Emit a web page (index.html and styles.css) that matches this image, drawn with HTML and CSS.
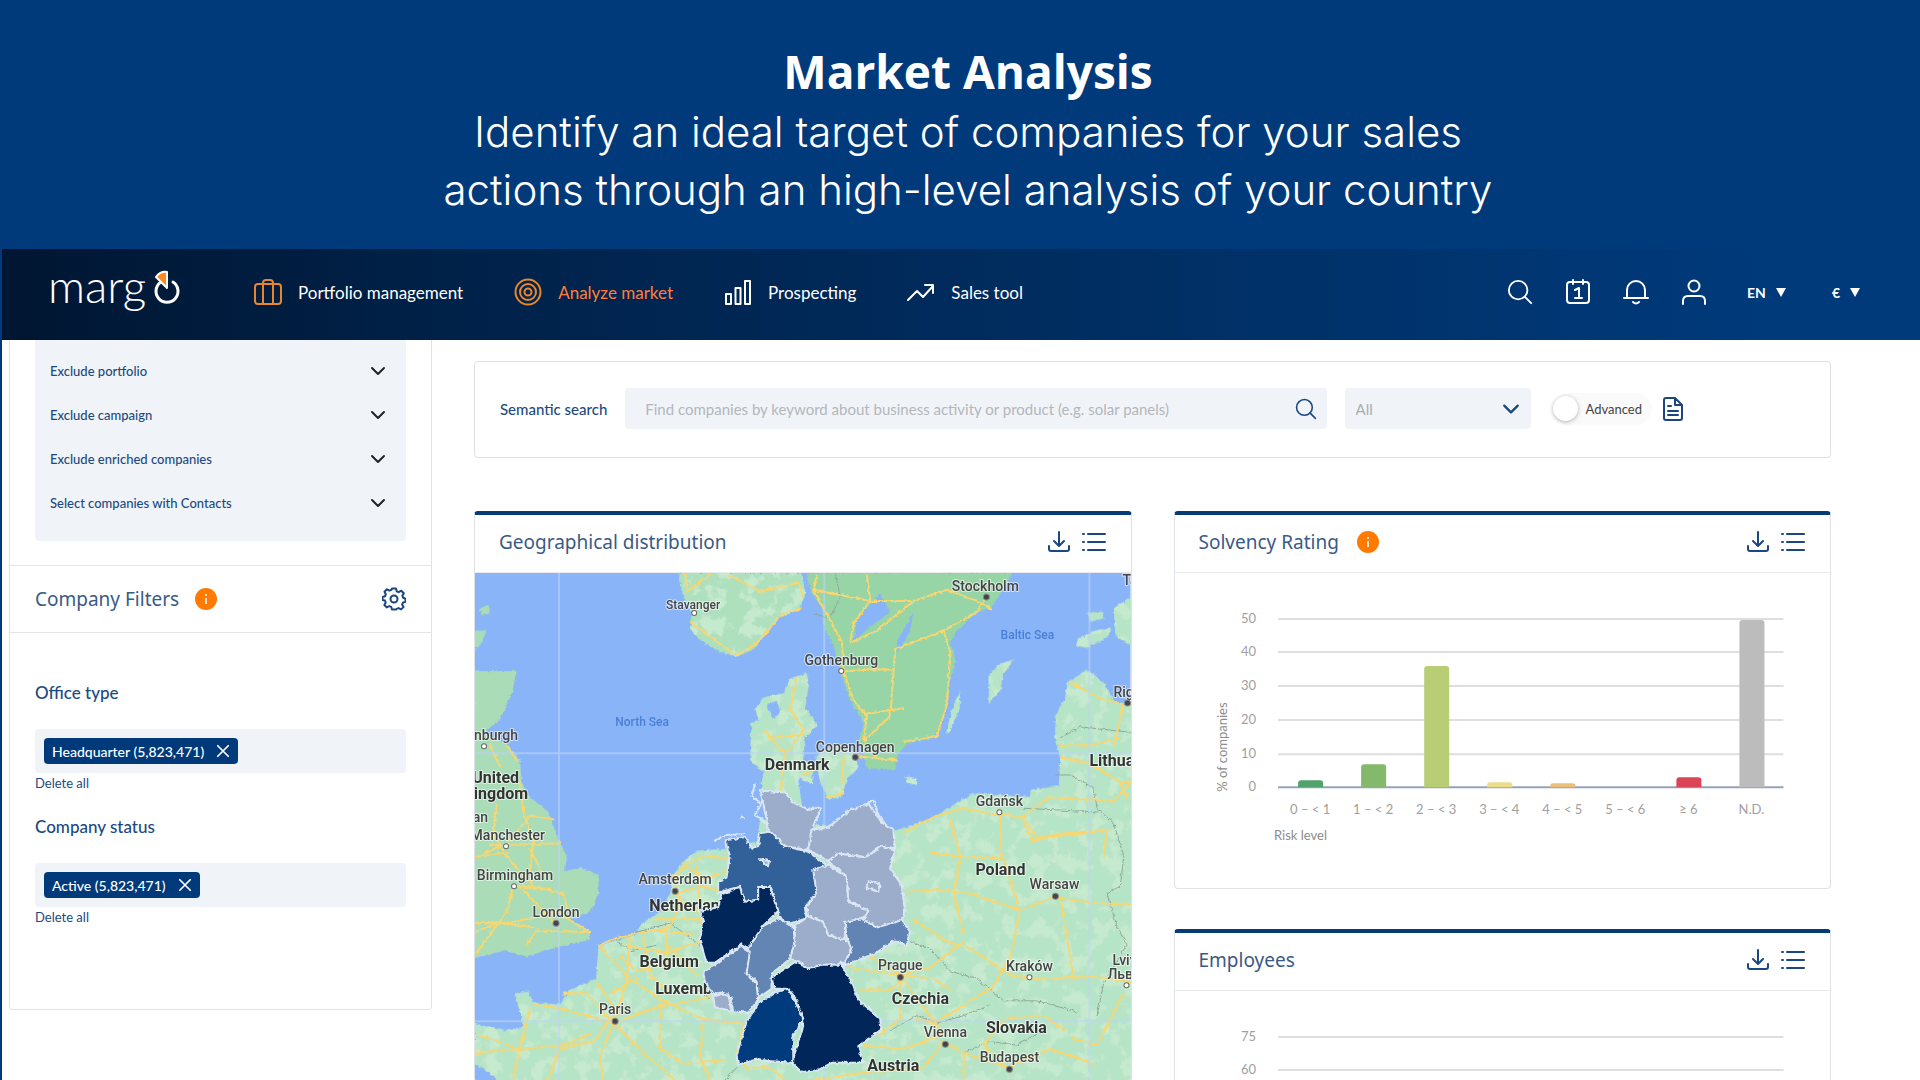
FILE: index.html
```
<!DOCTYPE html>
<html lang="en">
<head>
    <meta charset="UTF-8">
    <title>Margo - Market Analysis</title>
    <meta name="viewport" content="width=device-width, initial-scale=1">
    <link rel="stylesheet" href="styles.css">
</head>
<body>

    <!-- icons used more than once -->
    <svg class="sprite" aria-hidden="true">
        <symbol id="i-chevron" viewBox="0 0 16 16"><path d="M2 5l6 6 6-6"/></symbol>
        <symbol id="i-search" viewBox="0 0 28 28"><circle cx="12" cy="12" r="10"/><path d="M19 19l7 7"/></symbol>
        <symbol id="i-close" viewBox="0 0 16 16"><path d="M2 2l12 12M14 2L2 14"/></symbol>
        <symbol id="i-download" viewBox="0 0 22 22"><path d="M11 1v13M6 10l5 5 5-5M1 15v3q0 2 2 2h16q2 0 2-2v-3"/></symbol>
        <symbol id="i-list" viewBox="0 0 24 22"><path d="M6 3h17M6 11h17M6 19h17M1 3h1M1 11h1M1 19h1"/></symbol>
        <symbol id="i-info" viewBox="0 0 22 22"><circle cx="11" cy="11" r="11" fill="#ff7a00" stroke="none"/><path d="M10 6h2v2h-2zM10 10h2v6h-2z" fill="#ffe3c4" stroke="none"/></symbol>
    </svg>

    <header class="hero">
        <h1>Market Analysis</h1>
        <p>Identify an ideal target of companies for your sales<br>actions through an high-level analysis of your country</p>
    </header>

    <div class="app">
        <nav class="nav">
            <a class="logo" href="#" aria-label="margo">
                <svg width="134" height="46" viewBox="0 0 134 46">
                    <text x="0" y="34">marg</text>
                    <path d="M113 13a11 11 0 1 0 12 0" fill="none" stroke="#fff" stroke-width="3" stroke-linecap="round"/>
                    <path d="M108 8q4-6 11-5v16z" fill="#ff8a1e"/>
                </svg>
            </a>
            <ul class="menu">
                <li><a href="#">
                    <svg class="orange" width="28" height="28" viewBox="0 0 28 28"><rect x="1" y="6" width="26" height="20" rx="3"/><path d="M9 26V5q0-3 3-3h4q3 0 3 3v21"/></svg>
                    Portfolio management</a></li>
                <li class="on"><a href="#">
                    <svg class="orange" width="28" height="28" viewBox="0 0 28 28"><circle cx="14" cy="14" r="12.500"/><circle cx="14" cy="14" r="8"/><circle cx="14" cy="14" r="3.500"/></svg>
                    Analyze market</a></li>
                <li><a href="#">
                    <svg width="28" height="28" viewBox="0 0 28 28"><path d="M2 16h5v10H2zM11.500 10h5v16h-5zM21 3h5v23h-5z"/></svg>
                    Prospecting</a></li>
                <li><a href="#">
                    <svg width="28" height="28" viewBox="0 0 28 28"><path d="M1 22l9-9 6 6L26 8M18 7h8v8"/></svg>
                    Sales tool</a></li>
            </ul>
            <div class="tools">
                <button aria-label="Search"><svg width="26" height="26"><use href="#i-search"/></svg></button>
                <button aria-label="Calendar"><svg width="26" height="26" viewBox="0 0 26 26"><rect x="2" y="3" width="22" height="21" rx="3"/><path d="M8 1v4M18 1v4M10 11l4-2v10M10 19h7"/></svg></button>
                <button aria-label="Notifications"><svg width="26" height="26" viewBox="0 0 26 26"><path d="M1 19h24M4 19v-8a9 9 0 0 1 18 0v8M10 23q3 3 6 0"/></svg></button>
                <button aria-label="Account"><svg width="26" height="26" viewBox="0 0 26 26"><circle cx="13" cy="7" r="5.500"/><path d="M2 25v-3q0-5 5-5h12q5 0 5 5v3"/></svg></button>
                <div class="picks">
                    <button>EN <i></i></button>
                    <button>€ <i></i></button>
                </div>
            </div>
        </nav>

        <div class="page">
            <aside class="sidebar">
                <div class="group">
                    <button>Exclude portfolio <svg width="16" height="16"><use href="#i-chevron"/></svg></button>
                    <button>Exclude campaign <svg width="16" height="16"><use href="#i-chevron"/></svg></button>
                    <button>Exclude enriched companies <svg width="16" height="16"><use href="#i-chevron"/></svg></button>
                    <button>Select companies with Contacts <svg width="16" height="16"><use href="#i-chevron"/></svg></button>
                </div>
                <div class="side-head">
                    <h2>Company Filters</h2>
                    <svg width="22" height="22"><use href="#i-info"/></svg>
                    <button class="icon gear" aria-label="Settings"><svg width="24" height="24" viewBox="0 0 24 24"><path d="M10 1.500h4l.7 2.800 2 .9 2.600-1.500 2.500 2.600-1.400 2.500.8 2 2.300.9v3l-2.600.9-.8 2 1.400 2.500-2.400 2.300-2.500-1.300-2 .8L14 22.500h-4l-.8-2.600-2-.8-2.500 1.300-2.300-2.400 1.300-2.500-.8-2L.5 13v-3l2.600-.8.7-2-1.300-2.500 2.400-2.400 2.500 1.400 2-.9z"/><circle cx="12" cy="12" r="3.500"/></svg></button>
                </div>
                <div class="filters">
                    <section>
                        <h3>Office type</h3>
                        <div class="field">
                            <span class="chip">Headquarter (5,823,471) <button aria-label="Remove Headquarter"><svg width="14" height="14"><use href="#i-close"/></svg></button></span>
                        </div>
                        <a href="#">Delete all</a>
                    </section>
                    <section>
                        <h3>Company status</h3>
                        <div class="field">
                            <span class="chip">Active (5,823,471) <button aria-label="Remove Active"><svg width="14" height="14"><use href="#i-close"/></svg></button></span>
                        </div>
                        <a href="#">Delete all</a>
                    </section>
                </div>
            </aside>

            <main class="content">
                <form class="search">
                    <label for="q">Semantic search</label>
                    <div class="box">
                        <input id="q" type="text" placeholder="Find companies by keyword about business activity or product (e.g. solar panels)">
                        <button class="icon" type="button" aria-label="Search"><svg width="22" height="22"><use href="#i-search"/></svg></button>
                    </div>
                    <div class="drop">
                        <select aria-label="Category"><option>All</option></select>
                        <svg width="18" height="18"><use href="#i-chevron"/></svg>
                    </div>
                    <div class="extra">
                        <label class="toggle"><input type="checkbox"> Advanced</label>
                        <button class="icon" type="button" aria-label="Guide"><svg width="22" height="26" viewBox="0 0 22 26"><path d="M13 2H4Q2 2 2 4v18q0 2 2 2h14q2 0 2-2V9zM13 2v7h7M6 10h3M6 15h10M6 19h10"/></svg></button>
                    </div>
                </form>

                <div class="cards">
                    <section class="card">
                        <div class="card-head">
                            <h2>Geographical distribution</h2>
                            <div class="acts">
                                <button class="icon" aria-label="Download"><svg width="22" height="22"><use href="#i-download"/></svg></button>
                                <button class="icon" aria-label="List"><svg width="24" height="22"><use href="#i-list"/></svg></button>
                            </div>
                        </div>
                        <svg class="map" viewBox="0 0 655 508">
                            <defs>
                                <filter id="rough" x="-5%" y="-5%" width="110%" height="110%">
                                    <feTurbulence type="fractalNoise" baseFrequency=".09" numOctaves="3" seed="4"/>
                                    <feDisplacementMap in="SourceGraphic" scale="11" xChannelSelector="R" yChannelSelector="G"/>
                                </filter>
                                <filter id="relief" x="0" y="0" width="100%" height="100%">
                                    <feTurbulence type="fractalNoise" baseFrequency=".022" numOctaves="4" seed="11"/>
                                    <feColorMatrix values="0 0 0 0 .56  0 0 0 0 .82  0 0 0 0 .62  9 0 0 0 -4.600"/>
                                    <feComposite in2="SourceGraphic" operator="in"/>
                                </filter>
                                <path id="norway" d="M625 195L640 260 665 300 660 345 690 375 740 405 800 420 850 400 900 345 925 315 985 295 1005 250 995 195z"/>
                                <path id="sweden" d="M1010 195L1025 250 1055 290 1062 340 1090 390 1110 460 1125 500 1145 545 1180 600 1165 650 1190 722 1275 727 1282 685 1310 655 1390 640 1412 600 1430 550 1440 480 1455 430 1440 380 1460 350 1520 300 1560 290 1590 250 1620 210 1625 195z"/>
                                <path id="britain" d="M0 460H140L125 520 90 590 40 625 110 655 150 700 155 760 180 800 235 840 265 915 290 960 285 1000 330 990 385 1010 385 1060 360 1110 300 1130 360 1165 360 1185 260 1205 170 1230 100 1215 30 1230 0 1240zM0 350H50L30 390 0 410zM30 290L55 280 60 300 35 310z"/>
                                <g id="mainland">
                                    <path d="M1010 465L960 480 940 520 880 530 855 560 865 590 843 600 840 700 880 730 870 790 900 850 1000 850 985 760 1000 690 1005 640 1040 605 1005 560 1015 500z"/>
                                    <path d="M1035 690L1100 655 1150 680 1165 720 1130 750 1115 800 1075 806 1050 760zM985 695L1030 710 1025 765 990 750z"/>
                                    <path d="M1630 428L1590 440 1555 470 1555 547 1590 510 1598 470zM1470 515L1445 560 1428 628 1440 620 1468 560zM1305 743L1338 750 1340 768 1308 760z"/>
                                    <path d="M1820 375L1870 350 1922 345 1910 370 1850 397 1818 390zM1850 300L1895 300 1900 318 1860 325zM1930 290L1990 255V395L1935 365z"/>
                                    <path d="M1990 550L1930 542 1900 490 1850 455 1790 490 1785 530 1755 580 1755 650 1770 690 1765 770 1680 780 1680 800 1510 790 1440 825 1390 855 1310 880 1240 900 1100 880 870 860 860 920 760 940 680 945 640 975 610 1010 600 1060 570 1110 510 1145 500 1170 450 1185 385 1200 378 1290 300 1320 270 1360 190 1355 175 1325 135 1330 160 1420 100 1430 15 1410V1520L60 1545 95 1580H1990z"/>
                                </g>
                            </defs>
                            <rect width="655" height="508" fill="#8ab4f8"/>
                            <!-- land, lakes, relief -->
                            <g transform="translate(-5 -72) scale(.3333 .37)">
                                <g filter="url(#rough)">
                                    <use href="#mainland" fill="#b6e4c6"/>
                                    <use href="#mainland" fill="#b6e4c6" filter="url(#relief)"/>
                                    <use href="#norway" fill="#aee0be"/>
                                    <use href="#norway" fill="#aee0be" filter="url(#relief)"/>
                                    <use href="#sweden" fill="#98d5a6"/>
                                    <use href="#britain" fill="#a9dcb7"/>
                                    <path d="M1200 280L1230 250 1260 300 1200 340 1150 380 1160 320zM1280 380L1330 300 1320 350 1280 410zM890 550l30-10 10 30-20 20z" fill="#8ab4f8"/>
                                </g>
                                <!-- borders -->
                                <g class="border" filter="url(#rough)">
                                    <path d="M1770 640L1830 610 1980 625M1755 740L1800 740 1870 775 1880 830 1930 870 1960 960 1950 1040 1910 1060 1940 1150 1970 1200 1900 1300 1880 1390M1660 830L1880 840M1320 1190L1380 1210 1440 1270 1520 1290 1600 1350 1700 1350 1820 1380M1260 1430L1340 1390 1400 1410 1480 1390 1560 1360M440 1190L480 1215 560 1200M500 1165L600 1140 660 1180 690 1200M670 1310L720 1345M760 1568L800 1530M1095 195L1110 260 1080 315 1030 305M1480 1490L1560 1460 1640 1470 1720 1430"/>
                                </g>
                                <!-- roads -->
                                <g class="roads" filter="url(#rough)">
                                    <path d="M645 195L650 245 720 200M780 200L870 245 985 220 1000 260M665 330L740 380 800 418 860 385 930 310 990 290M1040 200L1030 240 1060 290 1115 380 1120 460 1150 540 1190 580 1180 650 1260 580 1275 400 1420 350 1440 410 1430 550 1400 635 1300 650M1120 460L1200 455 1270 455M1190 575L1300 560M1420 350L1520 300 1545 260M1030 240L1200 270 1330 270 1430 240 1520 270 1560 290M1330 270L1220 350 1150 380M1190 200L1200 270 1150 330 1140 380"/>
                                    <path d="M980 475L960 560 1000 620 945 685 885 620M895 640L1000 630M945 685L930 785M1000 740L1040 720M1120 690L1115 790 1070 800M1165 690L1280 700M1800 490L1880 530 1960 550 1930 660M1770 660L1860 660 1950 640M1770 690L1860 710 1950 760 1980 760M1980 760L1930 810 1730 800 1660 855 1590 845M1950 760L1970 800"/>
                                    <path d="M1300 895L1400 850 1480 830 1590 850 1590 940 1650 1110 1620 1230 1570 1310 1450 1380 1390 1410 1340 1400M1310 1055L1400 1050 1500 1060 1650 1105 1750 1070 1860 1085 1980 1090M1440 860L1470 960 1450 1060 1480 1170M1330 1130L1430 1190 1500 1210 1620 1280 1700 1290 1880 1285 1980 1300M1660 855L1700 910 1870 895M1370 950L1470 960 1590 965M1770 1070L1790 1180 1810 1290M1660 870L1690 920 1750 900 1910 890 1900 960"/>
                                    <path d="M1140 1260L1290 1280 1390 1290 1440 1320M1290 1280L1330 1330 1420 1440 1300 1480 1180 1470M1290 1290L1290 1400 1230 1440M1420 1460L1480 1490 1610 1530 1740 1480 1870 1520M1610 1530L1540 1470 1600 1400 1720 1390 1780 1430M1170 1320L1260 1320 1300 1290M1420 1460L1360 1530 1130 1550 1000 1568M1480 1490L1480 1568M1200 1230L1290 1280 1380 1260 1480 1190M1800 1450L1880 1470 1960 1330"/>
                                    <path d="M0 540L15 545M60 655L90 720M110 660L140 700M80 820L70 900 110 960 190 1040 280 1060 290 1100M150 760L160 840 190 920 180 1000M60 930L270 925M45 950L110 925 180 850 250 860M20 960L110 950M130 1040L110 1110 20 1220M15 1140L120 1140 260 1110 360 1165 200 1160 170 1200M160 1050L260 1145M180 940L220 1010M0 1170L80 1140 190 1150M140 1040L240 1050"/>
                                    <path d="M385 1200L480 1290 580 1350 700 1400 820 1410M385 1200L440 1180 550 1160 680 1170M620 1010L650 980 700 960 780 965M620 1060L700 1040 770 1060M610 1010L630 1090 600 1150 560 1160M680 980L690 1110 700 1180M590 1160L590 1250 500 1270 450 1230M480 1180L470 1290 440 1400M380 1300L440 1380 370 1460 270 1480M280 1330L350 1330 430 1410M190 1360L270 1370 430 1410M430 1410L550 1370 720 1340M430 1410L520 1490 620 1568M430 1410L390 1500 400 1568M180 1370L150 1480 20 1490M150 1480L280 1470 360 1440M20 1440L150 1480 130 1560M570 1360L570 1480 640 1520 760 1510M590 1200L680 1280M460 1200L590 1220 690 1190M550 1130L700 1130M640 980L700 1020 770 1000M700 1400L690 1500 720 1568M270 1480L230 1568M820 1410L800 1500 840 1540M500 1290L420 1330M520 1180L540 1280 600 1330M630 1080L680 1110M850 1530L900 1530 940 1560"/>
                                </g>
                            </g>
                            <path d="M84 0v508M349 0v508M614 0v508M0 180h655M0 448h655" stroke="#bcd3fa" stroke-opacity=".6"/>
                            <!-- labels -->
                            <g class="country" text-anchor="middle">
                                <text x="322" y="197">Denmark</text>
                                <text x="525" y="302">Poland</text>
                                <text x="445" y="431">Czechia</text>
                                <text x="541" y="460">Slovakia</text>
                                <text x="418" y="498">Austria</text>
                                <text x="194" y="394">Belgium</text>
                            </g>
                            <g class="country">
                                <text x="180" y="421">Luxembourg</text>
                                <text x="174" y="338">Netherlands</text>
                                <text x="614" y="193">Lithuania</text>
                                <text x="44" y="210" text-anchor="end">United</text>
                                <text x="53" y="226" text-anchor="end">Kingdom</text>
                            </g>
                            <g class="city" text-anchor="middle">
                                <text x="510" y="18">Stockholm</text>
                                <text x="218" y="36" class="small">Stavanger</text>
                                <text x="366" y="92">Gothenburg</text>
                                <text x="380" y="179">Copenhagen</text>
                                <text x="524" y="233">Gdańsk</text>
                                <text x="579" y="316">Warsaw</text>
                                <text x="425" y="397">Prague</text>
                                <text x="554" y="398">Kraków</text>
                                <text x="470" y="464">Vienna</text>
                                <text x="534" y="489">Budapest</text>
                                <text x="140" y="441">Paris</text>
                                <text x="200" y="311">Amsterdam</text>
                                <text x="81" y="344">London</text>
                                <text x="40" y="307">Birmingham</text>
                            </g>
                            <g class="city">
                                <text x="70" y="267" text-anchor="end">Manchester</text>
                                <text x="13" y="249" text-anchor="end">Isle of Man</text>
                                <text x="43" y="167" text-anchor="end">Edinburgh</text>
                                <text x="638" y="124">Riga</text>
                                <text x="647" y="12">Tallinn</text>
                                <text x="637" y="392">Lviv</text>
                                <text x="632" y="406">Львів</text>
                            </g>
                            <g class="sea" text-anchor="middle">
                                <text x="167" y="153">North Sea</text>
                                <text x="552" y="66">Baltic Sea</text>
                            </g>
                            <g class="capital">
                                <circle cx="511" cy="24" r="3"/><circle cx="380" cy="184" r="3"/><circle cx="580" cy="323" r="3"/><circle cx="425" cy="404" r="3"/><circle cx="470" cy="471" r="3"/><circle cx="534" cy="496" r="3"/><circle cx="140" cy="448" r="3"/><circle cx="200" cy="318" r="3"/><circle cx="81" cy="350" r="3"/><circle cx="652" cy="130" r="3"/>
                            </g>
                            <g class="town">
                                <circle cx="219" cy="40" r="2.500"/><circle cx="366" cy="98" r="2.500"/><circle cx="524" cy="239" r="2.500"/><circle cx="554" cy="404" r="2.500"/><circle cx="39" cy="313" r="2.500"/><circle cx="31" cy="273" r="2.500"/><circle cx="9" cy="173" r="2.500"/><circle cx="651" cy="412" r="2.500"/>
                            </g>
                            <!-- German states -->
                            <g transform="translate(-7 -73) scale(.3333 .37)">
                                <g class="states" filter="url(#rough)">
                                    <path fill="#336199" d="M770 920L830 910 850 940 870 935 875 900 910 895 950 935 1020 950 1080 990 1040 1000 1045 1060 1010 1100 1015 1130 960 1145 930 1125 930 1110 905 1045 870 1045 870 1080 830 1085 815 1045 750 1060 750 1030 775 1020 785 960z"/>
                                    <path fill="#9badcb" d="M875 785L950 790 980 820 1020 835 1060 830 1035 880 1040 915 1015 945 950 935 900 890 890 840z"/>
                                    <path fill="#9badcb" d="M1030 890L1080 885 1140 840 1200 820 1240 870 1275 890 1280 940 1240 935 1190 965 1110 955 1080 975 1020 945z"/>
                                    <path fill="#9badcb" d="M1080 975L1110 955 1190 965 1240 935 1280 945 1265 995 1300 1040 1310 1110 1300 1135 1230 1155 1180 1130 1200 1110 1140 1080 1135 1020z"/>
                                    <path fill="#9badcb" d="M1080 985L1135 1015 1140 1085 1200 1110 1190 1125 1130 1150 1130 1195 1080 1175 1065 1140 1020 1125 1015 1100 1045 1060 1035 1000z"/>
                                    <path fill="#9badcb" d="M980 1150L1020 1125 1065 1140 1080 1175 1155 1195 1140 1240 1110 1255 1065 1255 1020 1270 990 1245 965 1240 980 1190z"/>
                                    <path fill="#6284b4" d="M1130 1140L1180 1130 1225 1155 1300 1135 1325 1165 1315 1205 1280 1190 1220 1225 1120 1260 1150 1215 1135 1180z"/>
                                    <path fill="#6485b3" d="M840 1210L885 1150 930 1130 975 1150 980 1190 965 1240 910 1280 910 1320 870 1345 865 1300 835 1280z"/>
                                    <path fill="#6485b3" d="M705 1275L740 1255 820 1205 845 1220 835 1280 865 1310 870 1350 840 1385 790 1380 790 1345 760 1330 735 1335 710 1300z"/>
                                    <path fill="#9badcb" d="M735 1340L780 1335 790 1380 740 1370z"/>
                                    <path fill="#9badcb" d="M1200 1030L1235 1035 1230 1058 1195 1048zM875 970l28 6 -4 14z"/>
                                    <path fill="#00285a" d="M695 1110L750 1100 760 1065 815 1045 830 1085 870 1080 870 1045 905 1045 930 1110 885 1150 840 1210 820 1200 740 1250 715 1250 695 1190 705 1140z"/>
                                    <path fill="#00285a" d="M910 1290L985 1245 1020 1265 1065 1255 1120 1255 1155 1310 1170 1350 1235 1400 1240 1430 1170 1475 1185 1520 1090 1520 1050 1540 1000 1545 970 1520 985 1480 1005 1420 985 1350 960 1320 920 1320z"/>
                                    <path fill="#003b7e" d="M870 1360L920 1330 960 1320 985 1360 1005 1400 975 1450 975 1520 900 1515 870 1510 810 1525 805 1500 835 1410z"/>
                                    <path fill="none" d="M860 770L850 800 880 820 860 850 890 870M740 920L770 905 830 903M1190 825L1215 810 1230 850 1255 880M820 855l6 4"/>
                                </g>
                            </g>
                        </svg>
                    </section>

                    <div class="column">
                        <section class="card">
                            <div class="card-head">
                                <h2>Solvency Rating</h2>
                                <svg width="22" height="22"><use href="#i-info"/></svg>
                                <div class="acts">
                                    <button class="icon" aria-label="Download"><svg width="22" height="22"><use href="#i-download"/></svg></button>
                                    <button class="icon" aria-label="List"><svg width="24" height="22"><use href="#i-list"/></svg></button>
                                </div>
                            </div>
                            <svg class="chart" viewBox="0 0 655 315">
                                <path class="grid" d="M103 46h505M103 79h505M103 113h505M103 147h505M103 181h505"/>
                                <path class="axis" d="M103 214h505"/>
                                <g text-anchor="end">
                                    <text x="81" y="50">50</text>
                                    <text x="81" y="83">40</text>
                                    <text x="81" y="117">30</text>
                                    <text x="81" y="151">20</text>
                                    <text x="81" y="185">10</text>
                                    <text x="81" y="218">0</text>
                                </g>
                                <text class="title" transform="translate(52 174) rotate(-90)" text-anchor="middle">% of companies</text>
                                <path fill="#4fa36b" d="M123 214v-4q0-3 3-3h19q3 0 3 3v4z"/>
                                <path fill="#84b96c" d="M186 214v-20q0-3 3-3h19q3 0 3 3v20z"/>
                                <path fill="#b8cd74" d="M249 214v-118q0-3 3-3h19q3 0 3 3v118z"/>
                                <path fill="#ebdd8a" d="M312 214v-3q0-2 3-2h19q3 0 3 2v3z"/>
                                <path fill="#ebc07c" d="M375 214v-2q0-2 3-2h19q3 0 3 2v2z"/>
                                <path fill="#d94457" d="M501 214v-7q0-3 3-3h19q3 0 3 3v7z"/>
                                <path fill="#bcbcbc" d="M564 214v-164q0-3 3-3h19q3 0 3 3v164z"/>
                                <g text-anchor="middle">
                                    <text x="135" y="241">0 – &lt; 1</text>
                                    <text x="198" y="241">1 – &lt; 2</text>
                                    <text x="261" y="241">2 – &lt; 3</text>
                                    <text x="324" y="241">3 – &lt; 4</text>
                                    <text x="387" y="241">4 – &lt; 5</text>
                                    <text x="450" y="241">5 – &lt; 6</text>
                                    <text x="513" y="241">≥ 6</text>
                                    <text x="576" y="241">N.D.</text>
                                </g>
                                <text class="title" x="99" y="267">Risk level</text>
                            </svg>
                        </section>

                        <section class="card">
                            <div class="card-head">
                                <h2>Employees</h2>
                                <div class="acts">
                                    <button class="icon" aria-label="Download"><svg width="22" height="22"><use href="#i-download"/></svg></button>
                                    <button class="icon" aria-label="List"><svg width="24" height="22"><use href="#i-list"/></svg></button>
                                </div>
                            </div>
                            <svg class="chart" viewBox="0 0 655 315">
                                <path class="grid" d="M103 46h505M103 79h505"/>
                                <g text-anchor="end">
                                    <text x="81" y="50">75</text>
                                    <text x="81" y="83">60</text>
                                </g>
                            </svg>
                        </section>
                    </div>
                </div>
            </main>
        </div>
    </div>

</body>
</html>
```
FILE: styles.css
```
*{margin:0;padding:0;box-sizing:border-box;}
li{list-style: none}
a{color: inherit;text-decoration: none;}
button{
    border: 0;
    background: none;
    color: inherit;
    font: inherit;
    cursor: pointer;
}
svg{
    display: block;
    flex: none;
    fill: none;
    stroke: currentColor;
    stroke-width: 2;
    stroke-linecap: round;
    stroke-linejoin: round;
}
.sprite{
    position: absolute;
    width: 0;
    height: 0;
}

body{
    height: 100vh;
    display: flex;
    flex-direction: column;
    overflow: hidden;
    background: #003a7b;
    color: #1c4a80;
    font-family: Lato, "Liberation Sans", sans-serif;
    font-size: 16px;
}

/* hero */
.hero{
    padding: 39px 0 30px 16px;
    color: #fff;
    text-align: center;
    font-family: "Open Sans", "Noto Sans", sans-serif;
}
.hero h1{
    font-size: 46px;
    line-height: 64px;
    font-weight: 700;
}
.hero p{
    font-family: Inter, "Open Sans", sans-serif;
    font-size: 42px;
    line-height: 58px;
    font-weight: 300;
}

.app{
    flex: 1;
    min-height: 0;
    display: flex;
    flex-direction: column;
    margin-left: 2px;
    background: #fff;
}

/* top bar */
.nav{
    flex: none;
    height: 91px;
    display: flex;
    align-items: center;
    padding: 0 60px 5px 46px;
    background: linear-gradient(90deg, #001632, #00224a 25%, #002f64 60%, #003a7b 92%);
    color: #fff;
    font-size: 17px;
}
.logo{margin-right: 72px;}
.logo text{
    fill: #fff;
    stroke: none;
    font-size: 46px;
    font-weight: 300;
}
.menu{
    display: flex;
    gap: 51px;
}
.menu a{
    display: flex;
    align-items: center;
    gap: 16px;
}
.menu .on{color: #ff7f3a;}
.orange{color: #e8862e;}
.tools{
    display: flex;
    align-items: center;
    gap: 32px;
    margin-left: auto;
}
.picks{
    display: flex;
    gap: 46px;
    margin-left: 8px;
    font-size: 14px;
    font-weight: 700;
}
.picks button{
    display: flex;
    align-items: center;
    gap: 10px;
}
.picks i{
    border: 5px solid transparent;
    border-top: 9px solid #fff;
    border-bottom: 0;
}

.page{
    flex: 1;
    min-height: 0;
    display: flex;
    align-items: flex-start;
    gap: 42px;
    padding: 0 89px 0 7px;
    overflow: hidden;
}

/* sidebar */
.sidebar{
    flex: none;
    width: 423px;
    padding-bottom: 84px;
    border: 1px solid #dfe3e8;
    border-top: 0;
    border-radius: 0 0 4px 4px;
}
.group{
    margin: 0 25px 24px;
    padding: 9px 0 16px;
    border-radius: 0 0 4px 4px;
    background: #f0f4f9;
}
.group button{
    width: 100%;
    height: 44px;
    display: flex;
    align-items: center;
    justify-content: space-between;
    padding: 0 20px 0 15px;
    font-size: 13px;
    font-weight: 500;
}
.group svg{color: #222;}
.side-head{
    display: flex;
    align-items: center;
    gap: 16px;
    height: 68px;
    padding: 0 25px;
    border: 1px solid #e2e4e8;
    border-width: 1px 0;
}
.gear{margin-left: auto;}
h2{
    color: #3a5a86;
    font-family: "Noto Sans", "Open Sans", sans-serif;
    font-size: 19px;
    line-height: 26px;
    font-weight: 400;
}
h3{
    font-size: 17px;
    line-height: 20px;
    font-weight: 500;
}
.icon{color: #1b4680;}
.filters{
    display: flex;
    flex-direction: column;
    gap: 26px;
    padding: 50px 25px 0;
}
.field{
    height: 44px;
    display: flex;
    align-items: center;
    margin: 26px 0 2px;
    padding: 0 9px;
    border-radius: 4px;
    background: #f0f4f9;
}
.chip{
    height: 26px;
    display: flex;
    align-items: center;
    gap: 12px;
    padding: 0 8px;
    border-radius: 4px;
    background: #003a7b;
    color: #fff;
    font-size: 14px;
    font-weight: 500;
}
.filters a{
    display: block;
    font-size: 13px;
    line-height: 16px;
}

/* content */
.content{
    flex: 1;
    min-width: 0;
    padding-top: 21px;
}
.search{
    height: 97px;
    display: flex;
    align-items: center;
    gap: 18px;
    padding: 0 146px 2px 25px;
    border: 1px solid #dcdfe3;
    border-radius: 4px;
    font-size: 15px;
    font-weight: 500;
}
.box,
.drop{
    height: 41px;
    display: flex;
    align-items: center;
    border-radius: 4px;
    background: #f0f4f9;
}
.box{
    flex: 1;
    padding: 0 10px 0 20px;
}
.box input{
    flex: 1;
    min-width: 0;
    border: 0;
    outline: 0;
    background: none;
    font: inherit;
    font-weight: 400;
}
.box input::placeholder{color: #b3b7bb;}
.drop{
    position: relative;
    width: 186px;
}
.drop select{
    width: 100%;
    height: 100%;
    padding: 0 11px;
    border: 0;
    background: none;
    color: #a9adb1;
    font: inherit;
    font-weight: 400;
    appearance: none;
}
.drop svg{
    position: absolute;
    right: 11px;
    color: #1b4680;
    pointer-events: none;
}
.extra{
    display: flex;
    align-items: center;
    gap: 10px;
    margin-left: 4px;
}
.toggle{
    height: 32px;
    display: flex;
    align-items: center;
    gap: 8px;
    padding-right: 10px;
    border-radius: 16px;
    background: #fafafa;
    color: #444;
    font-size: 13px;
    font-weight: 400;
}
.toggle input{
    width: 25px;
    height: 25px;
    border-radius: 50%;
    background: #fff;
    box-shadow: 0 1px 4px rgba(0,0,0,.3);
    appearance: none;
}

.cards{
    display: grid;
    grid-template-columns: 1fr 1fr;
    align-items: start;
    gap: 42px;
    margin-top: 53px;
}
.column{
    display: grid;
    gap: 40px;
}
.card{
    border: 1px solid #dfe2e6;
    border-top: 4px solid #053c76;
    border-radius: 4px;
    overflow: hidden;
}
.card-head{
    height: 58px;
    display: flex;
    align-items: center;
    gap: 18px;
    padding: 0 25px 4px 24px;
    border-bottom: 1px solid #e8eaed;
}
.acts{
    display: flex;
    gap: 12px;
    margin-left: auto;
}

/* charts */
.chart,
.map{
    width: 100%;
    height: auto;
}
.chart{stroke: none;}
.chart text{
    fill: #a0a0a0;
    font-size: 13px;
}
.chart .title{fill: #8c8c8c;}
.chart .grid{stroke: #dedede;stroke-linecap: butt;}
.chart .axis{stroke: #94a3bd;stroke-linecap: butt;}

/* map */
.map{stroke: none;}
.map path{vector-effect: non-scaling-stroke;}
.roads{
    stroke: #f8d670;
    stroke-width: 2;
}
.border{
    stroke: #8fa89a;
    stroke-width: 1;
}
.states{
    stroke: #dbe6f5;
    stroke-width: 2;
}
.map text{
    fill: #444;
    stroke: rgba(255,255,255,.6);
    stroke-width: 2;
    paint-order: stroke;
    font-family: Roboto, sans-serif;
    font-size: 14px;
    font-weight: 500;
}
.map .country text{
    fill: #333;
    font-size: 16px;
    font-weight: 700;
}
.map .sea text{
    fill: #4a7fd6;
    stroke: none;
    font-size: 12px;
}
.map .small{font-size: 12px;}
.capital{
    fill: #444;
    stroke: #888;
    stroke-width: 1;
}
.town{
    fill: #fff;
    stroke: #666;
    stroke-width: 1;
}
```
